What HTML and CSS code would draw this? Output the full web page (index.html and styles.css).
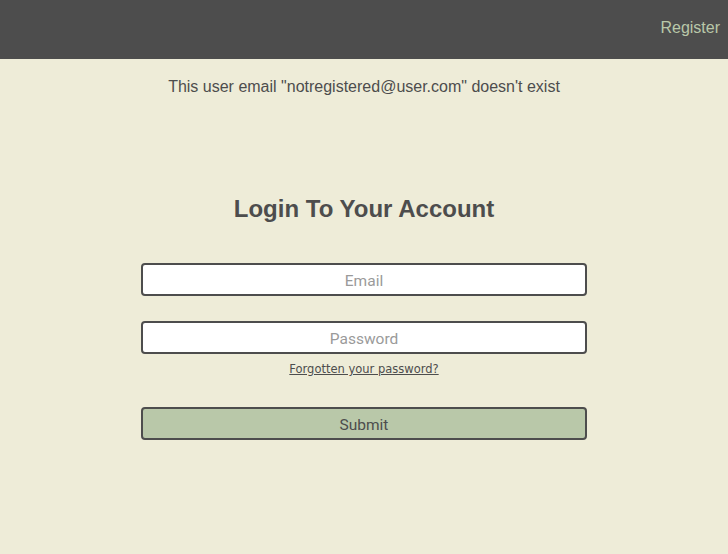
FILE: index.html
```html
<!DOCTYPE html>
<html>
<head>
<meta charset="utf-8">
<link rel="stylesheet" href="styles.css">
</head>
<body>
<header class="topbar">
  <a class="nav-link" href="#">Register</a>
</header>
<p class="flash">This user email "notregistered@user.com" doesn't exist</p>
<main class="login">
  <h1 class="title">Login To Your Account</h1>
  <form class="form">
    <input class="field" type="text" placeholder="Email">
    <input class="field field-pw" type="password" placeholder="Password">
    <a class="forgot" href="#">Forgotten your password?</a>
    <button class="submit" type="button">Submit</button>
  </form>
</main>
</body>
</html>
```
FILE: styles.css
```css
html, body {
  margin: 0;
  padding: 0;
  background: #eeecd8;
  font-family: "Liberation Sans", Arial, sans-serif;
  color: #4d4d4d;
}
.topbar {
  height: 59px;
  background: #4d4d4d;
  display: flex;
  justify-content: flex-end;
  align-items: center;
  padding-right: 8px;
}
.nav-link {
  color: #b9c8a9;
  text-decoration: none;
  font-size: 16px;
  margin-top: -4px;
}
.flash {
  margin: 18px 0 0;
  text-align: center;
  font-size: 16px;
  line-height: 20px;
}
.login {
  display: flex;
  flex-direction: column;
  align-items: center;
}
.title {
  margin: 98px 0 0;
  font-size: 24px;
  line-height: 28px;
  font-weight: bold;
}
.form {
  margin-top: 40px;
  width: 446px;
  display: flex;
  flex-direction: column;
  align-items: center;
}
.field {
  box-sizing: border-box;
  width: 446px;
  height: 33px;
  border: 2px solid #4d4d4d;
  border-radius: 4px;
  background: #fff;
  text-align: center;
  font-family: Roboto, Tahoma, sans-serif;
  font-size: 15.5px;
  color: #4d4d4d;
  padding: 2px 0 0;
  outline: none;
}
.field::placeholder {
  color: #9a9a9a;
}
.field-pw {
  margin-top: 25px;
}
.forgot {
  margin-top: 7px;
  font-family: "DejaVu Sans", Tahoma, sans-serif;
  font-size: 11.5px;
  line-height: 16px;
  color: #4d4d4d;
  text-decoration: underline;
}
.submit {
  box-sizing: border-box;
  margin-top: 30px;
  width: 446px;
  height: 33px;
  border: 2px solid #4d4d4d;
  border-radius: 4px;
  background: #b9c8a9;
  color: #4d4d4d;
  font-family: Roboto, Tahoma, sans-serif;
  font-size: 15.5px;
  padding: 2px 0 0;
}
```
